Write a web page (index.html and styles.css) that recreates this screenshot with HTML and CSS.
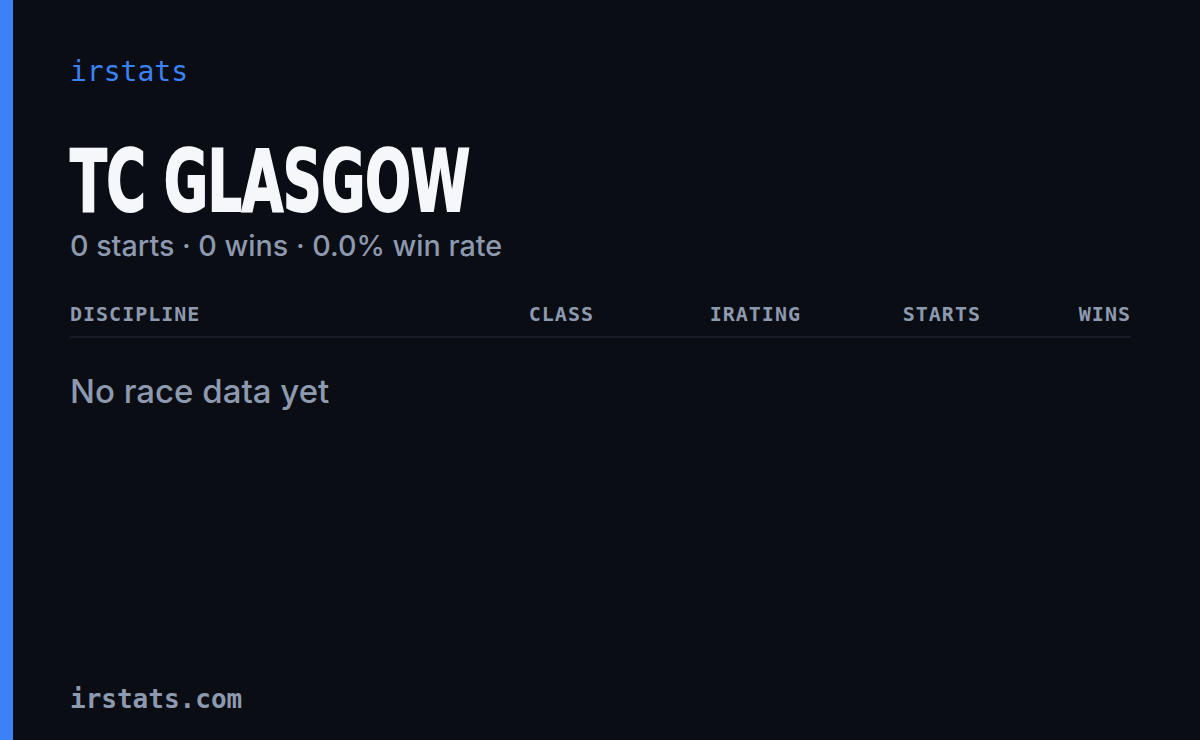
FILE: index.html
```html
<!DOCTYPE html>
<html lang="en">
<head>
  <meta charset="UTF-8">
  <title>irstats - TC GLASGOW</title>
  <link rel="stylesheet" href="styles.css">
</head>
<body>
  <div class="card">
    <div class="brand">irstats</div>

    <h1 class="name"><span>TC GLASGOW</span></h1>
    <p class="summary">0 starts · 0 wins · 0.0% win rate</p>

    <div class="table">
      <div class="row head">
        <span>DISCIPLINE</span>
        <span class="num">CLASS</span>
        <span class="num">IRATING</span>
        <span class="num">STARTS</span>
        <span class="num">WINS</span>
      </div>
      <p class="empty">No race data yet</p>
    </div>

    <div class="footer">irstats.com</div>
  </div>
</body>
</html>
```

FILE: styles.css
```css
html, body {
  margin: 0;
  height: 100%;
  background: #0a0d14;
}
.card {
  box-sizing: border-box;
  height: 740px;
  border-left: 13px solid #3b82f6;
  padding: 52px 69px 26px 57px;
  display: flex;
  flex-direction: column;
  font-family: Inter, sans-serif;
}
.brand {
  font-family: "DejaVu Sans Mono", monospace;
  font-size: 28px;
  color: #3b82f6;
  line-height: 40px;
}
.name {
  margin: 44px 0 0;
  font-family: "DejaVu Sans", sans-serif;
  font-weight: bold;
  font-size: 86px;
  line-height: 90px;
  color: #f5f7fb;
  letter-spacing: -1px;
  -webkit-text-stroke: 2px #f5f7fb;
}
.name span {
  display: inline-block;
  transform: scaleX(0.63);
  transform-origin: left center;
}
.summary {
  margin: 0;
  font-size: 28.7px;
  font-weight: 500;
  line-height: 40px;
  color: #8d99ae;
}
.table {
  margin-top: 36px;
}
.row {
  display: grid;
  grid-template-columns: 1fr 160px 207px 180px 150px;
}
.head {
  font-family: "DejaVu Sans Mono", monospace;
  font-weight: bold;
  font-size: 20px;
  letter-spacing: 1px;
  color: #8d99ae;
  padding-bottom: 10px;
  border-bottom: 2px solid #171b25;
}
.num {
  text-align: right;
}
.empty {
  margin: 33px 0 0;
  font-size: 33px;
  font-weight: 500;
  color: #8d99ae;
}
.footer {
  margin-top: auto;
  font-family: "DejaVu Sans Mono", monospace;
  font-weight: bold;
  font-size: 26px;
  color: #8d99ae;
}
```
